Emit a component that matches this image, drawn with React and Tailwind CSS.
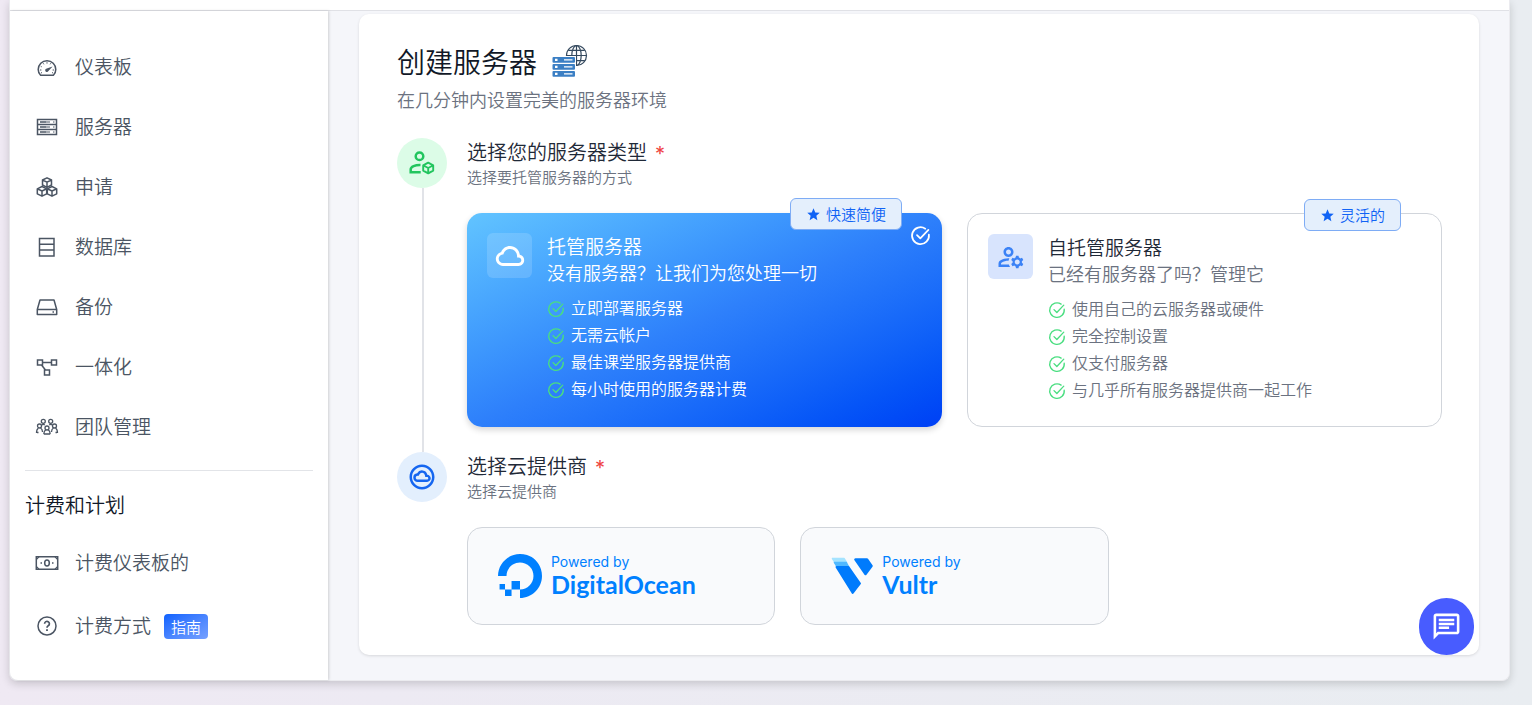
import { useState } from 'react'
import clsx from 'clsx'
import { BiCloud } from 'react-icons/bi'
import { MdOutlineChat, MdOutlineCloudCircle, MdOutlineManageAccounts, MdStar } from 'react-icons/md'
import { SiDigitalocean } from 'react-icons/si'

function LineIcon({ children, strokeWidth = 1.5 }) {
  return (
    <svg
      viewBox="0 0 24 24"
      fill="none"
      stroke="currentColor"
      strokeWidth={strokeWidth}
      className="h-6 w-6 shrink-0"
      aria-hidden="true"
    >
      {children}
    </svg>
  )
}

function GaugeIcon() {
  return (
    <LineIcon>
      <path d="M5.600 20.200h12.800c1.600-1.500 2.400-3.500 2.400-5.700a8.800 8.800 0 0 0-17.600 0c0 2.200.8 4.200 2.400 5.700z" strokeLinejoin="round" />
      <path d="M12 7.200v1.400M8.300 8.300l.6 1M15.700 8.300l-.6 1M5.700 11.200l1 .6M4.900 15h1.500M17.600 15h1.500M6 18l1-.5M18 18l-1-.5" strokeWidth="1" />
      <path d="M17.600 11.500 13.400 16a1.700 1.700 0 1 1-1.600-2.400z" fill="currentColor" stroke="none" />
    </LineIcon>
  )
}

function RackIcon() {
  return (
    <LineIcon>
      <path d="M2.500 4.500h19v15h-19zM2.500 9.500h19M2.500 14.500h19" />
      <path d="M5 7h6M5 12h6M5 17h6" strokeWidth="1.600" />
      <path d="M11 7h4M11 12h4M11 17h4M18 7h1.500M18 12h1.500M18 17h1.500" strokeWidth="1" />
    </LineIcon>
  )
}

function CubesIcon() {
  return (
    <LineIcon>
      <g strokeLinejoin="round">
        <path d="M12 2.800 16.500 5v5L12 12.300 7.500 10V5zM7.500 5 12 7.200 16.500 5M12 7.200v5" />
        <path d="M7 11.500 11.700 13.800v5L7 21.200l-4.700-2.400v-5zM2.300 13.800 7 16l4.700-2.200M7 16v5" />
        <path d="m17 11.500 4.700 2.300v5L17 21.200l-4.700-2.400v-5zM12.300 13.800 17 16l4.700-2.200M17 16v5" />
      </g>
    </LineIcon>
  )
}

function DatabaseIcon() {
  return (
    <LineIcon>
      <path d="M4.500 3.500h14.500v17.500H4.500zM4.500 9.200H19M4.500 15H19" />
    </LineIcon>
  )
}

function DriveIcon() {
  return (
    <LineIcon>
      <path d="M2.300 14.500 5 5h14l2.700 9.500v5H2.300zM2.300 14.500h19.400" strokeLinejoin="round" />
      <path d="M17.500 17h1.500" strokeWidth="1.300" />
    </LineIcon>
  )
}

function NodesIcon() {
  return (
    <LineIcon>
      <path d="M2.500 5h5v5h-5zM16.500 5h5v5h-5zM9.500 15h5v5h-5zM7.500 7.500h9M6.500 10l4 5" />
    </LineIcon>
  )
}

function TeamIcon() {
  return (
    <LineIcon strokeWidth={1.3}>
      <circle cx="8.300" cy="6.300" r="2" />
      <circle cx="15.700" cy="6.300" r="2" />
      <circle cx="4.500" cy="11" r="2" />
      <circle cx="19.500" cy="11" r="2" />
      <circle cx="12" cy="13" r="2" />
      <path d="M1.500 18c0-2.500.7-4.200 2-5M5.500 13c1.300.7 2 2 2 4M2 17.500h1.500M22.500 18c0-2.500-.7-4.200-2-5M18.500 13c-1.300.7-2 2-2 4M22 17.500h-1.500" />
      <path d="M8.800 19c.1-2.200.9-3.500 2-4.200M15.200 19c-.1-2.200-.9-3.500-2-4.200M8.800 19h6.400M7 10c.8-.8 1.800-.8 2.800 0M14.200 10c1-.8 2-.8 2.800 0" />
    </LineIcon>
  )
}

function CashIcon() {
  return (
    <LineIcon>
      <path d="M1.300 5.800h21.400v12.400H1.300z" />
      <ellipse cx="12" cy="12" rx="2.300" ry="3" />
      <path d="M5.500 12h1.500M17 12h1.500" strokeWidth="1.700" />
      <path d="M1.300 8.500 4 5.800M20 5.800l2.700 2.700M1.300 15.500 4 18.200M20 18.200l2.700-2.700" strokeWidth="1.200" />
    </LineIcon>
  )
}

function QuestionIcon() {
  return (
    <LineIcon>
      <circle cx="12" cy="12" r="9" />
      <path d="M9.600 9.700a2.400 2.400 0 1 1 3.600 2.100c-.8.5-1.200.9-1.200 1.900" strokeWidth="1.700" />
      <path d="M12 15.300v1.700" strokeWidth="1.800" />
    </LineIcon>
  )
}

function CheckIcon({ className, strokeWidth = 1.8 }) {
  return (
    <svg
      viewBox="0 0 24 24"
      fill="none"
      stroke="currentColor"
      strokeWidth={strokeWidth}
      strokeLinecap="round"
      strokeLinejoin="round"
      className={className}
      aria-hidden="true"
    >
      <path d="M17.500 4.200A9.700 9.700 0 1 0 21.600 11" />
      <path d="m8 11.500 3.800 3.800L21 5.500" />
    </svg>
  )
}

function UserBoxIcon() {
  return (
    <svg viewBox="0 0 30 30" fill="none" stroke="currentColor" strokeWidth="2.500" className="h-[30px] w-[30px]" aria-hidden="true">
      <circle cx="12.500" cy="8.200" r="3.800" />
      <path d="M13.500 17c-5.300-.2-9.800 1.800-9.800 4.300v2.900h10" />
      <path d="m21.200 14.700 5 2.700v5.200l-5 2.700-5-2.700v-5.200zM16.500 17.500l4.700 2.500 4.700-2.500M21.200 20v5" strokeWidth="1.900" strokeLinejoin="round" />
    </svg>
  )
}

function ServerGlobeIcon() {
  return (
    <svg viewBox="0 0 36 34" fill="none" className="h-[34px] w-9" aria-hidden="true">
      <g stroke="#34495e" strokeWidth="1.200">
        <circle cx="24.500" cy="11.500" r="10" />
        <ellipse cx="24.500" cy="11.500" rx="4.700" ry="10" />
        <path d="M24.500 1.500v20M14.500 11.500h20M16.300 6.300h16.400M16.300 16.700h16.400" />
      </g>
      <path d="M0 12h24v21H0z" fill="#fff" />
      <g fill="#3b7fc4">
        <rect x="0.500" y="13" width="22.500" height="5.800" rx="1" />
        <rect x="0.500" y="20" width="22.500" height="5.800" rx="1" />
        <rect x="0.500" y="27" width="22.500" height="5.800" rx="1" />
      </g>
      <path d="M3 15.900h2.500M3 22.900h2.500M3 29.900h2.500" stroke="#fff" strokeWidth="2.200" />
      <path d="M12 15.900h8.500M12 22.900h8.500M12 29.900h8.500" stroke="#fff" strokeWidth="1.300" />
    </svg>
  )
}

function VultrLogo() {
  return (
    <svg viewBox="0 0 42 38" className="h-[38px] w-[42px]" strokeLinejoin="round" aria-hidden="true">
      <path d="M1.500 1.500h11.500l2.500 4H4z" fill="#a5e3ff" stroke="#a5e3ff" strokeWidth="1.500" />
      <path d="M3.500 5.500h11.800l2.200 4H6z" fill="#51b9ff" stroke="#51b9ff" strokeWidth="1.500" />
      <path d="M5.500 10h12L29 26.500 21.700 36z" fill="#007bfc" stroke="#007bfc" strokeWidth="2" />
      <path d="M24.500 2.500h11.500L40.500 9 34.500 17z" fill="#007bfc" stroke="#007bfc" strokeWidth="2.500" />
    </svg>
  )
}

const MAIN_NAV = [
  { label: '仪表板', icon: GaugeIcon },
  { label: '服务器', icon: RackIcon },
  { label: '申请', icon: CubesIcon },
  { label: '数据库', icon: DatabaseIcon },
  { label: '备份', icon: DriveIcon },
  { label: '一体化', icon: NodesIcon },
  { label: '团队管理', icon: TeamIcon },
]

const BILLING_NAV = [
  { label: '计费仪表板的', icon: CashIcon },
  { label: '计费方式', icon: QuestionIcon, tag: '指南' },
]

const SERVER_TYPES = [
  {
    id: 'managed',
    title: '托管服务器',
    text: '没有服务器？让我们为您处理一切',
    badge: '快速简便',
    icon: <BiCloud size={34} aria-hidden="true" />,
    features: ['立即部署服务器', '无需云帐户', '最佳课堂服务器提供商', '每小时使用的服务器计费'],
  },
  {
    id: 'self',
    title: '自托管服务器',
    text: '已经有服务器了吗？管理它',
    badge: '灵活的',
    icon: <MdOutlineManageAccounts size={30} aria-hidden="true" />,
    features: ['使用自己的云服务器或硬件', '完全控制设置', '仅支付服务器', '与几乎所有服务器提供商一起工作'],
  },
]

const PROVIDERS = [
  { id: 'do', name: 'DigitalOcean', logo: <SiDigitalocean size={44} aria-hidden="true" /> },
  { id: 'vultr', name: 'Vultr', logo: <VultrLogo /> },
]

function NavItem({ item }) {
  const Icon = item.icon
  return (
    <li>
      <a href="#" className="flex h-[60px] items-center gap-4 px-[25px] text-[19px] text-[#4b5563]">
        <Icon />
        <span className="pb-[2px]">{item.label}</span>
        {item.tag ? (
          <span className="-ml-[3px] rounded-[4px] bg-gradient-to-br from-[#0a62ff] to-[#75a0ff] px-[7px] text-[15px] leading-[25px] text-white">
            {item.tag}
          </span>
        ) : null}
      </a>
    </li>
  )
}

function Sidebar() {
  return (
    <aside className="z-10 w-[318px] shrink-0 rounded-bl-lg bg-white pt-[26px] shadow-[1px_0_3px_rgba(0,0,0,0.16)]">
      <nav>
        <ul>
          {MAIN_NAV.map((item) => (
            <NavItem key={item.label} item={item} />
          ))}
        </ul>
        <hr className="mx-[15px] mt-[13px] border-[#e2e4e8]" />
        <h2 className="mt-[19px] px-[15px] text-xl leading-[30px] text-[#111827]">计费和计划</h2>
        <ul className="mt-[13px] flex flex-col gap-[3px]">
          {BILLING_NAV.map((item) => (
            <NavItem key={item.label} item={item} />
          ))}
        </ul>
      </nav>
    </aside>
  )
}

function Step({ icon, tone, title, text, last, children }) {
  return (
    <section className="flex gap-5">
      <div className="flex shrink-0 flex-col items-center">
        <div className={clsx('flex h-[50px] w-[50px] items-center justify-center rounded-full', tone)}>{icon}</div>
        {last ? null : <div className="ml-[2px] w-[2px] flex-1 bg-[#e1e3e8]" />}
      </div>
      <div className={clsx('min-w-0 flex-1', !last && 'pb-[25px]')}>
        <h2 className="flex gap-2 text-xl leading-7 text-[#1f2937]">
          {title}
          <span className="font-['Inter',sans-serif] leading-8 font-normal text-[#ef4444]">*</span>
        </h2>
        <p className="-mt-1 text-[15px] leading-[22px] text-[#6b7280]">{text}</p>
        {children}
      </div>
    </section>
  )
}

function ServerCard({ type, selected, onSelect }) {
  return (
    <label
      className={clsx(
        'relative flex cursor-pointer gap-[15px] rounded-[15px] px-5 pt-5 pb-[23px]',
        selected
          ? 'bg-gradient-to-br from-[#62c4ff] via-[#2e80fb] to-[#003ff5] shadow-[0_3px_6px_rgba(0,0,0,0.16)]'
          : 'border border-[#d1d5db] bg-white',
      )}
    >
      <input type="radio" name="server-type" checked={selected} onChange={onSelect} className="sr-only" />
      <span
        className={clsx(
          'flex h-[45px] w-[45px] shrink-0 items-center justify-center rounded-md',
          selected ? 'bg-white/15 text-white' : 'bg-[#d8e4fd] text-[#3b82f6]',
        )}
      >
        {type.icon}
      </span>
      <span className="flex min-w-0 flex-col">
        <span className={clsx('text-[19px] leading-[25px]', selected ? 'text-white' : 'text-[#1f2937]')}>{type.title}</span>
        <span className={clsx('text-lg leading-7', selected ? 'text-white' : 'text-[#6b7280]')}>{type.text}</span>
        <span className="mt-2 flex flex-col">
          {type.features.map((feature) => (
            <span
              key={feature}
              className={clsx('flex items-center gap-[6px] text-base leading-[27px]', selected ? 'text-white' : 'text-[#6b7280]')}
            >
              <CheckIcon className="mt-[3px] h-[18px] w-[18px] shrink-0 text-[#4ade80]" />
              {feature}
            </span>
          ))}
        </span>
      </span>
      <span className="absolute -top-[15px] right-10 flex h-8 items-center gap-[5px] rounded-md border border-[#7eacf5] bg-[#e4effc] px-[15px] text-[15px] text-[#1063f5]">
        <MdStar size={15} aria-hidden="true" />
        {type.badge}
      </span>
      {selected ? <CheckIcon strokeWidth={2} className="absolute top-3 right-[11px] h-[21px] w-[21px] text-white" /> : null}
    </label>
  )
}

function ProviderCard({ provider, checked, onSelect }) {
  return (
    <label className="flex h-[98px] cursor-pointer items-center gap-[9px] rounded-[15px] border border-[#d1d5db] bg-[#f9fafc] px-[30px] text-[#0080ff]">
      <input type="radio" name="provider" checked={checked} onChange={onSelect} className="sr-only" />
      {provider.logo}
      <span className="flex flex-col">
        <span className="font-['Inter',sans-serif] text-[14px] leading-4 font-normal">Powered by</span>
        <span className="font-['Lato',sans-serif] text-[25px] leading-7 font-bold">{provider.name}</span>
      </span>
    </label>
  )
}

export default function App() {
  const [serverType, setServerType] = useState('managed')
  const [provider, setProvider] = useState(null)

  return (
    <div className="min-h-screen bg-gradient-to-r from-[#efe9f3] via-[#edeaf3] via-25% to-[#e9edf1] pr-[22px] pb-6 pl-[9px] font-['Noto_Sans_CJK_SC',sans-serif] font-[350]">
      <div className="rounded-b-lg border border-t-0 border-[#ebebef] bg-[#f5f6fa] shadow-[0_3px_8px_rgba(0,0,0,0.16)]">
        <header className="h-[11px] border-b border-[#e0e1e6] bg-white" />
        <div className="flex">
          <Sidebar />
          <main className="min-w-0 flex-1 pt-[3px] pr-[30px] pb-[25px] pl-[31px]">
            <div className="rounded-[10px] bg-white pt-[26px] pr-[37px] pb-[30px] pl-[38px] shadow-[0_1px_3px_rgba(0,0,0,0.12)]">
              <div className="flex items-center gap-[15px]">
                <h1 className="text-[28px] leading-[42px] text-[#111827]">创建服务器</h1>
                <ServerGlobeIcon />
              </div>
              <p className="mt-[3px] mb-[25px] text-lg leading-7 text-[#6b7280]">在几分钟内设置完美的服务器环境</p>

              <Step icon={<UserBoxIcon />} tone="bg-[#dcfce7] text-[#22c55e]" title="选择您的服务器类型" text="选择要托管服务器的方式">
                <div className="mt-[25px] grid grid-cols-2 gap-[25px]">
                  {SERVER_TYPES.map((type) => (
                    <ServerCard
                      key={type.id}
                      type={type}
                      selected={serverType === type.id}
                      onSelect={() => setServerType(type.id)}
                    />
                  ))}
                </div>
              </Step>

              <Step
                icon={<MdOutlineCloudCircle size={30} aria-hidden="true" />}
                tone="bg-[#e3effd] text-[#1566f0]"
                title="选择云提供商"
                text="选择云提供商"
                last
              >
                <div className="mt-[25px] grid grid-cols-3 gap-[25px]">
                  {PROVIDERS.map((item) => (
                    <ProviderCard
                      key={item.id}
                      provider={item}
                      checked={provider === item.id}
                      onSelect={() => setProvider(item.id)}
                    />
                  ))}
                </div>
              </Step>
            </div>
          </main>
        </div>
      </div>

      <button
        type="button"
        aria-label="在线聊天"
        className="fixed right-[58px] bottom-[50px] z-20 flex h-[57px] w-[55px] items-center justify-center rounded-full bg-[#485cff] text-white"
      >
        <MdOutlineChat size={31} aria-hidden="true" />
      </button>
    </div>
  )
}
